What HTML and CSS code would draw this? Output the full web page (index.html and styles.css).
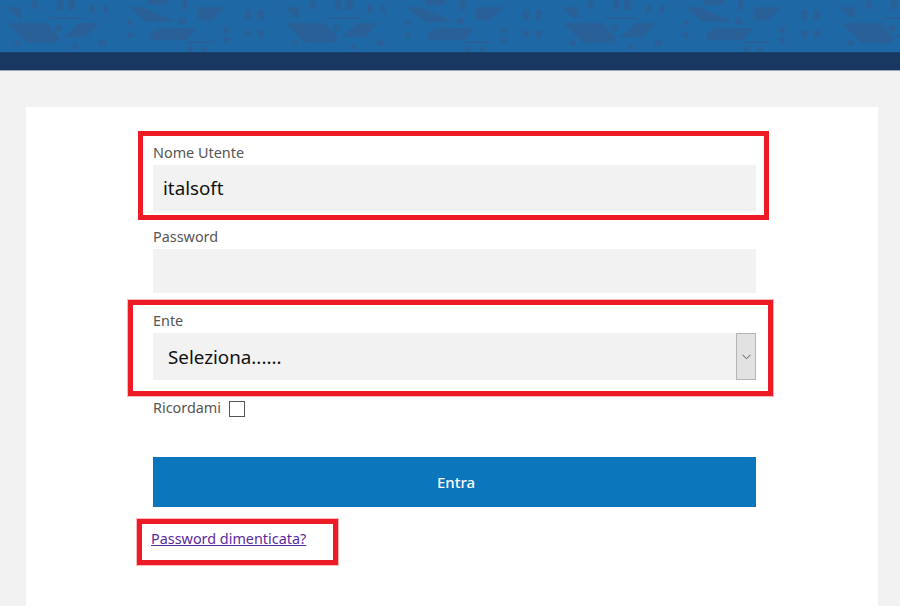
FILE: index.html
```html
<!DOCTYPE html>
<html lang="it">
<head>
<meta charset="utf-8">
<title>Login</title>
<link rel="stylesheet" href="styles.css">
</head>
<body>
<header class="banner">
  <svg class="banner-art" width="900" height="52" aria-hidden="true">
    <defs>
      <filter id="soft" x="-5%" y="-5%" width="110%" height="110%"><feGaussianBlur stdDeviation="0.6"/></filter>
      <g id="tile">
        <polygon points="5,7 21,7 21,20"/>
        <polygon points="7,23 47,23 60,38 57,43 27,43"/>
        <polygon points="80,23 100,23 87,37 63,37"/>
        <rect x="32" y="1" width="6" height="8"/>
        <rect x="57" y="0" width="6" height="10"/>
        <rect x="68" y="0" width="7" height="10"/>
        <rect x="90" y="5" width="5" height="8"/>
        <rect x="103" y="5" width="5" height="8"/>
        <rect x="50" y="17" width="32" height="2"/>
        <circle cx="58" cy="28" r="3.5"/>
        <circle cx="102" cy="43" r="3.5"/>
        <circle cx="17" cy="43" r="3"/>
        <circle cx="75" cy="47" r="3"/>
        <polygon points="128,7 142,7 177,22 147,22"/>
        <polygon points="198,7 226,7 212,20 198,20"/>
        <polygon points="150,33 160,28 197,28 187,40 152,40"/>
        <rect x="148" y="0" width="19" height="5"/>
        <rect x="182" y="0" width="5" height="10"/>
        <rect x="185" y="41" width="28" height="2"/>
        <circle cx="130" cy="23" r="3"/>
        <circle cx="130" cy="35" r="3"/>
        <circle cx="182" cy="21" r="3.5"/>
        <rect x="223" y="27" width="6" height="6"/>
        <rect x="223" y="37" width="6" height="6"/>
        <rect x="245" y="10" width="6" height="10"/>
        <rect x="258" y="10" width="6" height="10"/>
        <rect x="245" y="30" width="6" height="7"/>
        <rect x="258" y="30" width="6" height="7"/>
        <circle cx="190" cy="49" r="3"/>
        <circle cx="204" cy="49" r="3"/>
      </g>
    </defs>
    <rect width="900" height="52" fill="#1f68a6"/>
    <g fill="#2a6098" filter="url(#soft)">
      <use href="#tile"/>
      <use href="#tile" x="278"/>
      <use href="#tile" x="556"/>
      <use href="#tile" x="834"/>
    </g>
  </svg>
</header>
<div class="navbar"></div>

<main class="page">
  <section class="card">
    <form class="login-form">
      <div class="field field-user">
        <label class="field-label" for="user">Nome Utente</label>
        <input class="control" id="user" type="text" value="italsoft">
      </div>
      <div class="field field-pass">
        <label class="field-label" for="pass">Password</label>
        <input class="control control-short" id="pass" type="password">
      </div>
      <div class="field field-ente">
        <label class="field-label" for="ente">Ente</label>
        <div class="select-box" id="ente">
          <span class="select-value">Seleziona......</span>
          <span class="select-arrow">
            <svg width="9" height="6" viewBox="0 0 9 6" aria-hidden="true"><path d="M0.5 0.8 L4.5 4.8 L8.5 0.8" fill="none" stroke="#555" stroke-width="1"/></svg>
          </span>
        </div>
      </div>
      <div class="remember">
        <span class="field-label">Ricordami</span>
        <span class="check"></span>
      </div>
      <button class="submit" type="button">Entra</button>
      <a class="forgot" href="#">Password dimenticata?</a>
    </form>
    <div class="mark mark-user"></div>
    <div class="mark mark-ente"></div>
    <div class="mark mark-forgot"></div>
  </section>
</main>
</body>
</html>
```
FILE: styles.css
```css
* { box-sizing: border-box; }
html, body { margin: 0; height: 606px; overflow: hidden; }
body {
  background: #f2f2f2;
  font-family: "Noto Sans", "Open Sans", sans-serif;
}
.banner { height: 52px; }
.banner-art { display: block; }
.navbar {
  height: 19px;
  background: #183862;
  border-top: 1px solid #17406f;
  border-bottom: 1px solid #9aa7b4;
}
.page { padding: 36px 22px 0 26px; }
.card {
  position: relative;
  background: #fff;
  height: 499px;
  padding: 36px 122px 0 127px;
}
.login-form { display: flex; flex-direction: column; }
.field { display: flex; flex-direction: column; }
.field-user { margin-bottom: 16px; }
.field-pass { margin-bottom: 18px; }
.field-ente { margin-bottom: 16px; }
.field-label {
  font-size: 14.4px;
  line-height: 20px;
  color: #555;
}
.field-label + .control { margin-top: 2px; }
.control {
  height: 46px;
  border: 0;
  outline: 0;
  background: #f2f2f2;
  padding: 0 10px;
  font: 18.8px "Noto Sans", "Open Sans", sans-serif;
  color: #111;
  width: 100%;
}
.control-short { height: 44px; }
.select-box {
  margin-top: 2px;
  height: 47px;
  background: #f2f2f2;
  display: flex;
  align-items: center;
  justify-content: space-between;
  padding-left: 15px;
  font-size: 18.8px;
  color: #111;
}
.select-arrow {
  width: 20px;
  height: 47px;
  background: #e2e2e2;
  border: 1px solid #b5b5b5;
  display: flex;
  align-items: center;
  justify-content: center;
}
.remember {
  display: flex;
  align-items: center;
  gap: 8px;
  height: 24px;
}
.check {
  width: 16px;
  height: 16px;
  border: 1px solid #555;
  background: #fff;
  margin-top: 2px;
}
.submit {
  margin-top: 37px;
  height: 50px;
  border: 0;
  background: #0b76bb;
  color: #fff;
  font: 500 15px "Noto Sans", "Open Sans", sans-serif;
  padding: 0 0 0 3px;
}
.forgot {
  margin: 22px 0 0 -2px;
  font-size: 14.4px;
  line-height: 20px;
  color: #5b2a9d;
  align-self: flex-start;
}
.mark {
  position: absolute;
  border: 5px solid #ed1c24;
  pointer-events: none;
}
.mark-user { left: 112px; top: 24px; width: 631px; height: 89px; }
.mark-ente { left: 102px; top: 193px; width: 645px; height: 96px; box-shadow: 0 0 0 1px rgba(237, 28, 36, 0.3); }
.mark-forgot { left: 111px; top: 412px; width: 201px; height: 46px; box-shadow: 0 0 0 1px rgba(237, 28, 36, 0.3); }
```
